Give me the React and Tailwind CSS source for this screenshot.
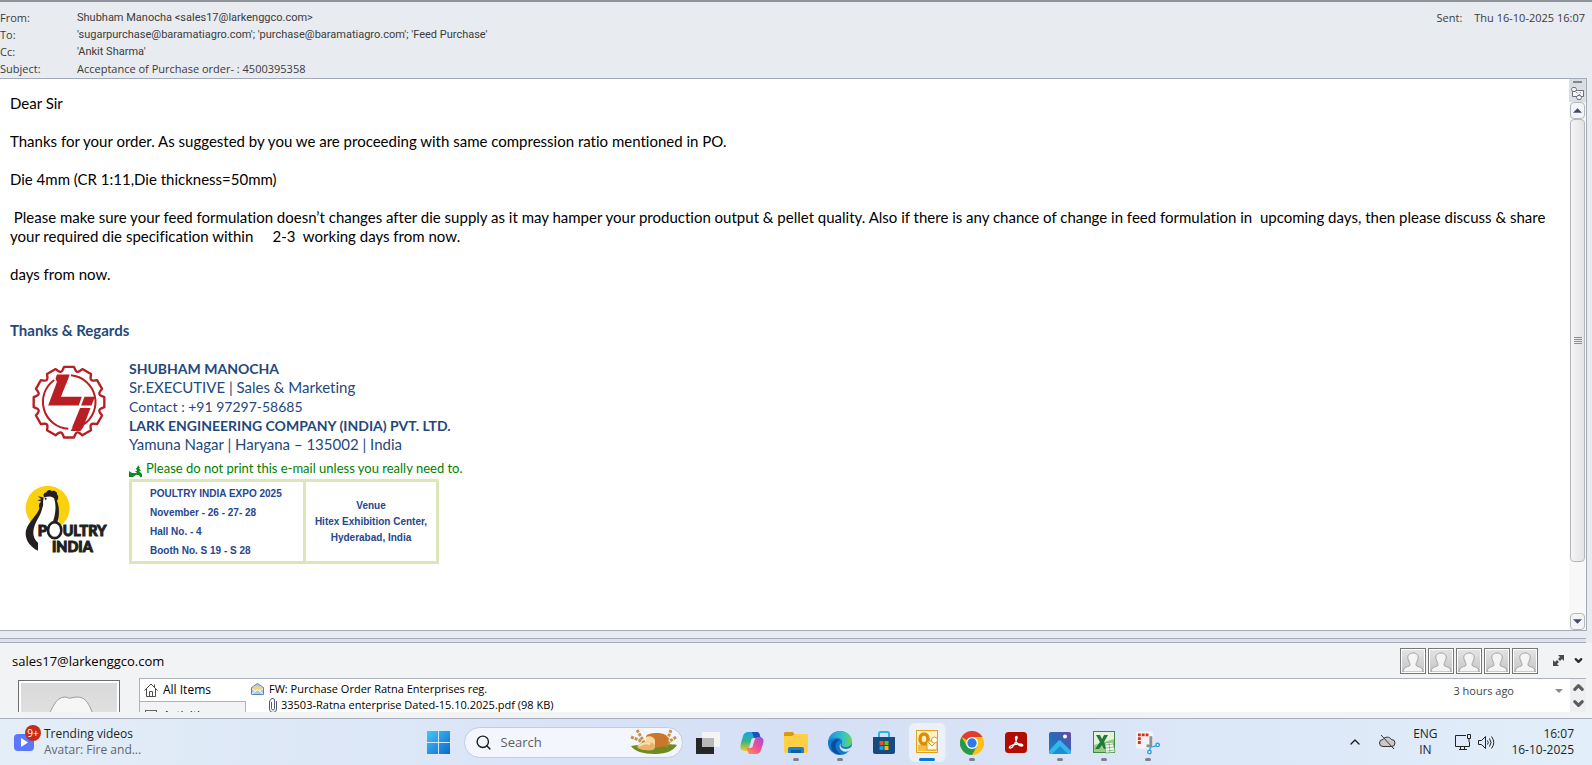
import { ChevronDown, ChevronUp, Search } from "lucide-react";

const headers = [
  { label: "From:", value: "Shubham Manocha <sales17@larkenggco.com>" },
  { label: "To:", value: "'sugarpurchase@baramatiagro.com'; 'purchase@baramatiagro.com'; 'Feed Purchase'" },
  { label: "Cc:", value: "'Ankit Sharma'" },
  { label: "Subject:", value: "Acceptance of Purchase order- : 4500395358", wide: true },
];

// Cog outline: 12 flat teeth joined by shallow curved valleys
function cogPath() {
  const at = (angle, r) => `${(128 + r * Math.cos(angle)).toFixed(1)} ${(128 + r * Math.sin(angle)).toFixed(1)}`;
  let d = "";
  for (let i = 0; i < 12; i++) {
    const mid = (i * 30 - 90) * (Math.PI / 180);
    d += `${i === 0 ? "M" : "L"}${at(mid - 0.14, 106)}L${at(mid + 0.14, 106)}L${at(mid + 0.19, 98)}`;
    d += `Q${at(mid + 0.26, 89)} ${at(mid + 0.334, 98)}`;
  }
  return d + "Z";
}

function LarkLogo() {
  return (
    <svg viewBox="18 18 220 222" className="w-[74px] h-[75px]" role="img" aria-label="Lark logo">
      <path d={cogPath()} fill="none" stroke="#b81f25" strokeWidth="7" strokeLinejoin="round" />
      <path d="M84 62A80 80 0 0 0 126 207M134 48A80 80 0 0 1 170 195" fill="none" stroke="#b81f25" strokeWidth="6" />
      <path d="M92 46h38l-4 12-22 54h62l-9 26H66l26-70-4-10z" fill="#b81f25" />
      <path d="M174 112h31l-10 26h-31zM161 145h31l-22 58-8 11h-29l6-11h-2z" fill="#b81f25" />
    </svg>
  );
}

function PoultryLogo() {
  return (
    <svg viewBox="72 44 252 212" className="w-[84px] h-[71px]" role="img" aria-label="Poultry India">
      <circle cx="143" cy="115" r="66" fill="#f9d10c" />
      <path d="M130 84c8-10 28-8 34 8 6 18 5 34 8 48 3 12 5 20 10 28l-22 34-44-30-16 40c-12-10-12-44 0-62 14-22 26-30 30-66z" fill="#fff" />
      <path d="M120 104c2 26-34 50-42 78-5 24 8 48 36 62v-24c-14-12-18-30-10-52 8-22 22-34 24-62zM133 84c-6-8 0-16 6-15 2-8 12-10 16-4 8-4 18 2 16 10 6 4 4 16-2 20-6-12-18-18-36-11z" fill="#231f20" />
      <path d="M162 86c8 20 4 50-2 66-2 8-4 12-8 18h14c10-14 14-44 8-66-1-8-6-16-12-18z" fill="#231f20" />
      <path d="M131 84l-17-4 10 9-12 3 12 4c-8 6-9 14-5 20 9 0 12-8 10-18z" fill="#231f20" />
      <circle cx="137" cy="88" r="3" fill="#231f20" />
      <ellipse cx="164" cy="182" rx="20" ry="24" fill="#fff" stroke="#231f20" strokeWidth="8" />
      <text x="113" y="200" className="fill-[#231f20] stroke-[#231f20] stroke-3 font-['Lato'] font-black text-[45px]">P</text>
      <text x="188" y="200" className="fill-[#231f20] stroke-[#231f20] stroke-3 font-['Lato'] font-black text-[43px]">ULTRY</text>
      <text x="156" y="247" className="fill-[#231f20] stroke-[#231f20] stroke-3 font-['Lato'] font-black text-[43px]">INDIA</text>
    </svg>
  );
}

function Signature() {
  return (
    <div className="flex text-[#1f497d]">
      <div className="w-[119px] shrink-0 flex flex-col items-start pl-[14px]">
        <div className="pl-2 pt-[6px]"><LarkLogo /></div>
        <div className="pt-[44px]"><PoultryLogo /></div>
      </div>
      <div>
        <p className="font-bold text-[14px] leading-[19px]">SHUBHAM MANOCHA</p>
        <p>Sr.EXECUTIVE | Sales &amp; Marketing</p>
        <p className="text-[14px] leading-[19px]">Contact : +91 97297-58685</p>
        <p className="font-bold text-[14px] leading-[19px]">LARK ENGINEERING COMPANY (INDIA) PVT. LTD.</p>
        <p>Yamuna Nagar | Haryana – 135002 | India</p>
        <p className="flex items-center gap-1 pt-[5px] pb-px text-[#008000] text-[13px] leading-[19px]">
          <svg viewBox="0 0 13 12" className="w-[13px] h-3 mt-1" fill="#0b8a1e" aria-hidden="true">
            <path d="M9 0l2 3h-1l2 3h-2l3 3v3h-2l-1-2H8L4 8h4L6 6h2L7 3h1zM0 6l3 2h4v2l-3 2H0z" />
          </svg>
          Please do not print this e-mail unless you really need to.
        </p>
        <table className="w-[310px] border-[3px] border-[#dbe7b9] font-['Liberation_Sans',sans-serif] font-bold text-[#26468f] text-[10px]">
          <tbody>
            <tr>
              <td className="w-[174px] border-r-[3px] border-[#dbe7b9] pl-[18px] pt-[2px] pb-px leading-[19px]">
                <p>POULTRY INDIA EXPO 2025</p>
                <p>November - 26 - 27- 28</p>
                <p>Hall No. - 4</p>
                <p>Booth No. S 19 - S 28</p>
              </td>
              <td className="text-center align-middle leading-4">
                <p>Venue</p>
                <p>Hitex Exhibition Center,</p>
                <p>Hyderabad, India</p>
              </td>
            </tr>
          </tbody>
        </table>
      </div>
    </div>
  );
}

function MessageScrollbar() {
  return (
    <div className="w-[17px] shrink-0 flex flex-col items-center bg-[#f8f8f9]">
      <div className="w-full h-[23px] bg-[#d9dee5] flex flex-col items-center pt-[2px] gap-1">
        <span className="w-[9px] h-[2px] bg-[#80868c]" />
        <svg viewBox="0 0 13 13" className="w-[13px] h-[13px]" fill="#f6f6f8" stroke="#6b7078" aria-hidden="true">
          <path d="M1.500 3.500h11v6h-11z" />
          <path d="M1.500.5h3l1 2-1 2h-3l-1-2zM6.500 8.500h3l1 2-1 2h-3l-1-2z" />
          <path d="M5 5l4 3M9 5l1 2" strokeDasharray="1 1" />
        </svg>
      </div>
      <button aria-label="Scroll up" className="w-[15px] h-[17px] shrink-0 border border-[#b3b8bf] rounded-sm bg-[#f5f5f6] flex items-center justify-center">
        <svg viewBox="0 0 10 5" className="w-[9px] h-[5px]"><path d="M5 0l5 5H0z" fill="#414b74" /></svg>
      </button>
      <div className="w-[15px] basis-[443px] grow-[9] border border-[#b3b8bf] rounded-sm bg-linear-to-r from-[#f4f4f5] to-[#e4e4e6] flex flex-col items-center justify-center gap-px">
        <span className="w-2 h-px bg-[#8a8f96]" />
        <span className="w-2 h-px bg-[#8a8f96]" />
        <span className="w-2 h-px bg-[#8a8f96]" />
        <span className="w-2 h-px bg-[#8a8f96]" />
      </div>
      <div className="basis-[51px] grow" />
      <button aria-label="Scroll down" className="w-[15px] h-[17px] shrink-0 border border-[#b3b8bf] rounded-sm bg-[#f5f5f6] flex items-center justify-center">
        <svg viewBox="0 0 10 5" className="w-[9px] h-[5px]"><path d="M5 5l5-5H0z" fill="#414b74" /></svg>
      </button>
    </div>
  );
}

function Avatar() {
  return (
    <button aria-label="Contact" className="w-[26px] h-[26px] border border-[#777] p-px bg-white">
      <svg viewBox="0 0 22 22" className="w-full h-full bg-linear-to-b from-[#e3e3e3] to-[#c6c6c6]" fill="#f4f4f4" stroke="#a2a2a2">
        <path d="M11 3c4 0 6 3 5 6s-2 4-2 6 7 1 7 7H1c0-6 7-5 7-7s-1-3-2-6 1-6 5-6z" />
      </svg>
    </button>
  );
}

function PeoplePane() {
  return (
    <section className="bg-[#f1f3f5] text-black font-['Open_Sans',sans-serif]">
      <div className="flex items-center h-[35px] pl-3 pr-2">
        <span className="pt-[2px] text-[13px]">sales17@larkenggco.com</span>
        <div className="ml-auto flex gap-[2px]">
          <Avatar /><Avatar /><Avatar /><Avatar /><Avatar />
        </div>
        <button aria-label="Expand" className="ml-[15px]">
          <svg viewBox="0 0 11 11" className="w-[11px] h-[11px]" fill="#4a4a4a">
            <path d="M5 0h6v6L9 4 7 6 5 4l2-2zM6 11H0V5l2 2 2-2 2 2-2 2z" />
          </svg>
        </button>
        <button aria-label="Collapse" className="ml-[9px]">
          <ChevronDown size={11} strokeWidth={5} color="#2d2d2d" />
        </button>
      </div>
      <div className="flex h-[34px] overflow-hidden pr-[6px]">
        <div className="ml-[18px] mt-[2px] w-[102px] h-[102px] shrink-0 border border-[#6e6e6e] bg-white p-[2px]">
          <svg viewBox="0 0 96 96" className="w-full h-full bg-linear-to-b from-[#d9d9d9] to-[#efefef]">
            <path d="M26 34c6-8 8-20 18-20 3 0 4 2 6 1 18-5 18 11 24 19v40H26z" fill="#f6f6f6" stroke="#9b9b9b" />
          </svg>
        </div>
        <div className="ml-[19px] flex grow border-t border-l border-[#aeb3bb] bg-white">
          <div className="w-[106px] shrink-0 text-[12px]">
            <button className="flex items-center gap-[5px] w-full h-[23px] pl-1 border-b border-[#aeb3bb]">
              <svg viewBox="0 0 14 14" className="w-[14px] h-[14px]" fill="none" stroke="#4d4d4d">
                <path d="M0.500 7.500L7 1l6.500 6.500M2.500 6v7.500h9V6M5.500 13V8.500h3V13M10.500 4V1.500" />
              </svg>
              All Items
            </button>
            <button className="flex items-center gap-[6px] w-full h-[27px] pl-[5px] border-r border-[#aeb3bb] bg-[#f1f3f5]">
              <span className="w-3 h-3 border border-[#666]" />
              Activities
            </button>
          </div>
          <div className="grow pl-[5px] pt-[2px] text-[11px] leading-4">
            <p className="flex items-center gap-[5px]">
              <svg viewBox="0 0 14 13" className="w-[13px] h-3" aria-hidden="true">
                <path d="M.5 5L7 .5 13.500 5v7.500H.5z" fill="#a9c9f0" stroke="#4f78b5" />
                <path d="M2.500 3.500h9v4L7 9 2.500 7.500z" fill="#f8d470" />
                <path d="M1 12l6-5 6 5M1 6l4 3M13 6L9 9" fill="none" stroke="#fff" />
              </svg>
              FW: Purchase Order Ratna Enterprises reg.
            </p>
            <p className="flex items-center gap-1 pl-[18px]">
              <svg viewBox="0 0 8 14" className="w-2 h-[14px]" fill="none" stroke="#4b5a70" aria-hidden="true">
                <path d="M2.500 4v6.500a1.500 1.500 0 0 0 3 0V3a2 2 0 0 0-4-1 3 3 0 0 0-1 2v7a3 3 0 0 0 7 0V3" />
              </svg>
              33503-Ratna enterprise Dated-15.10.2025.pdf (98 KB)
            </p>
          </div>
          <div className="flex items-start gap-[41px] pt-1 pr-[7px] text-[11px] leading-4 text-[#444]">
            3 hours ago
            <svg viewBox="0 0 8 4" className="w-2 h-1 mt-[6px]"><path d="M0 0h8L4 4z" fill="#8b8b8b" /></svg>
          </div>
          <div className="w-4 shrink-0 bg-[#eeeff1] flex flex-col items-center pt-px gap-px">
            <button aria-label="Previous items"><ChevronUp size={15} strokeWidth={5} color="#5c5c5c" /></button>
            <button aria-label="Next items"><ChevronDown size={15} strokeWidth={5} color="#5c5c5c" /></button>
          </div>
        </div>
      </div>
      <div className="h-[6px]" />
    </section>
  );
}

function TaskViewIcon() {
  return (
    <svg viewBox="0 0 24 24" className="w-6 h-6">
      <path d="M6 1h18v15H6z" fill="#f4f4f4" />
      <path d="M0 7h18v16H0z" fill="#262626" />
      <path d="M6 7h12v9H6z" fill="#b9b9b9" />
    </svg>
  );
}

function CopilotIcon() {
  return (
    <svg viewBox="0 0 24 24" className="w-6 h-6">
      <defs>
        <linearGradient id="cpA" x1="0" y1="0" x2="0" y2="1"><stop offset="0" stopColor="#1ba1e6" /><stop offset=".5" stopColor="#35b58a" /><stop offset="1" stopColor="#f2cf1d" /></linearGradient>
        <linearGradient id="cpB" x1="1" y1="0" x2="0" y2="1"><stop offset="0" stopColor="#9a4be6" /><stop offset=".5" stopColor="#f0538f" /><stop offset="1" stopColor="#ff9a4a" /></linearGradient>
      </defs>
      <path d="M8 1h8l2 6h-4c-2 0-3 1-3 3l-2 7c-1 3-2 3-4 3-5 0-5-4-4-8l2-7c1-3 3-4 5-4z" fill="url(#cpA)" />
      <path d="M12 1h5c2 0 3 2 3 4l1 2h-7l-1-3z" fill="#1a50c4" />
      <path d="M16 23H9l-3-6h4c2 0 3-1 3-3l2-6c1-2 2-2 4-2 5 0 5 4 4 7l-2 6c-1 3-3 4-5 4z" fill="url(#cpB)" />
    </svg>
  );
}

function FolderIcon() {
  return (
    <svg viewBox="0 0 24 24" className="w-6 h-6">
      <path d="M0 2.500C0 1.500.7 1 1.500 1H9l2 3-2 4H0z" fill="#d99a12" />
      <path d="M0 5h8l3-2h12l1 1v17l-1 1H1l-1-1z" fill="#ffcf45" />
      <path d="M4 22v-4q0-2 2-2h12q2 0 2 2v4z" fill="#1583d0" />
      <path d="M7 19h10v3H7z" fill="#0b5ca8" />
    </svg>
  );
}

function EdgeIcon() {
  return (
    <svg viewBox="0 0 24 24" className="w-6 h-6">
      <defs>
        <linearGradient id="edA" x1="0" y1="0" x2="1" y2="0"><stop offset="0" stopColor="#1e8fdc" /><stop offset=".6" stopColor="#35c1c8" /><stop offset="1" stopColor="#6ad84f" /></linearGradient>
      </defs>
      <circle cx="12" cy="12" r="12" fill="#1179cf" />
      <path d="M.5 10C1 4 6 0 12 0c7 0 12 5 12 10 0 4-3 6-6 6-4 0-5-2-4-4 1-3-2-5-5-5-4 0-7 1-8.500 3z" fill="url(#edA)" />
      <path d="M10 10c-4 3-3 10 3 13-7 1-10-4-10-8 0-5 5-8 9-6z" fill="#0d4f9f" />
      <path d="M13 12c-2 3 1 6 5 6 2 0 4-1 5-2v2l-2 2c-7 3-12-4-8-8z" fill="#d9e6f7" />
    </svg>
  );
}

function StoreIcon() {
  return (
    <svg viewBox="0 0 24 24" className="w-6 h-6">
      <path d="M7 6V2.500C7 1.700 7.700 1 8.500 1h7c.8 0 1.500.7 1.500 1.500V6" fill="none" stroke="#27b4ee" strokeWidth="2" />
      <path d="M1 6h22v15a2 2 0 0 1-2 2H3a2 2 0 0 1-2-2z" fill="#174a80" />
      <path d="M7.500 10h4v4h-4z" fill="#f25022" /><path d="M12.500 10h4v4h-4z" fill="#7fba00" />
      <path d="M7.500 15h4v4h-4z" fill="#00a4ef" /><path d="M12.500 15h4v4h-4z" fill="#ffb900" />
    </svg>
  );
}

function OutlookIcon() {
  return (
    <svg viewBox="0 0 24 24" className="w-6 h-6">
      <rect x="1.500" y=".5" width="21" height="22" fill="#fdf0c4" stroke="#e0a21b" />
      <path d="M3 15c6-1 12-3 18-8v14H3z" fill="#f3bf3e" />
      <ellipse cx="9" cy="9" rx="4" ry="5" fill="none" stroke="#e08a08" strokeWidth="3.500" />
      <path d="M12 11h10v9H12z" fill="#fff6dd" stroke="#d9991d" />
      <path d="M12 11l5 5 5-5" fill="none" stroke="#d9991d" />
      <circle cx="19.500" cy="10" r="3" fill="#fff" stroke="#e0a21b" />
    </svg>
  );
}

function ChromeIcon() {
  return (
    <svg viewBox="0 0 24 24" className="w-6 h-6">
      <circle cx="12" cy="12" r="12" fill="#fbc116" />
      <path d="M12 12L1.600 6A12 12 0 0 1 22.400 6H12z" fill="#e33b2e" />
      <path d="M12 12l5 3-5 9A12 12 0 0 1 1.600 6L7 15z" fill="#269a48" />
      <circle cx="12" cy="12" r="6" fill="#fff" />
      <circle cx="12" cy="12" r="4.700" fill="#3178ee" />
    </svg>
  );
}

function AcrobatIcon() {
  return (
    <svg viewBox="0 0 24 24" className="w-6 h-6">
      <rect x="1" y="1" width="22" height="21" rx="3.500" fill="#b30b00" />
      <path d="M5.500 17c-1-2 5-4 9-4 5 0 5 2 3 2-3 0-6-4-6-8 0-2 2-2 1.500 0-.7 4-4.500 11-7.500 10z" fill="none" stroke="#fff" strokeWidth="1.300" />
    </svg>
  );
}

function PhotosIcon() {
  return (
    <svg viewBox="0 0 24 24" className="w-6 h-6">
      <defs>
        <linearGradient id="phA" x1="0" y1="1" x2="1" y2="0"><stop offset="0" stopColor="#1682cf" /><stop offset=".5" stopColor="#2a68b8" /><stop offset="1" stopColor="#6b49a5" /></linearGradient>
      </defs>
      <rect x="1" y="1" width="22" height="22" rx="2" fill="url(#phA)" />
      <path d="M1 20l9-10c1-1 2-1 3 0l10 10v1a2 2 0 0 1-2 2H3a2 2 0 0 1-2-2z" fill="#33b6ea" />
      <path d="M4 23l8-8 8 8z" fill="#1b8fd6" />
      <circle cx="17" cy="5.500" r="2" fill="#fff" />
    </svg>
  );
}

function ExcelIcon() {
  return (
    <svg viewBox="0 0 24 24" className="w-6 h-6">
      <rect x="1.500" y=".5" width="21" height="21" fill="#e4f1dd" stroke="#3c8a3f" />
      <path d="M2 14L22 8v13H2z" fill="#9ccb8b" />
      <path d="M4 4h4l2 4 2-4h4l-4 7 4 7h-4l-2-4-3 4H3l5-7z" fill="#217a35" />
      <path d="M13 12l8-1 2 10-9 1z" fill="#fff" stroke="#5fa35a" strokeWidth=".7" />
      <path d="M14 14l7-1M14 17l8-1M15 20l7-1M17 12l1 9" stroke="#5fa35a" strokeWidth=".7" />
    </svg>
  );
}

function SnipIcon() {
  return (
    <svg viewBox="0 0 25 24" className="w-6 h-6">
      <rect x="0" y="0" width="18" height="18" rx="2" fill="#f3f3f5" />
      <path d="M13 3.500H3.500V14" fill="none" stroke="#d13412" strokeWidth="3" strokeDasharray="3 1" />
      <path d="M11 15h6M15.500 5v12" fill="none" stroke="#8b8f96" strokeWidth="3" />
      <path d="M17 16l4-1M15 17l-1 3" fill="none" stroke="#2a9fe0" strokeWidth="1.500" />
      <circle cx="22.500" cy="14" r="1.800" fill="#fff" stroke="#2a9fe0" strokeWidth="1.500" />
      <circle cx="14" cy="21.500" r="1.800" fill="#fff" stroke="#2a9fe0" strokeWidth="1.500" />
    </svg>
  );
}

const apps = [
  { name: "Task view", Icon: TaskViewIcon },
  { name: "Copilot", Icon: CopilotIcon },
  { name: "File Explorer", Icon: FolderIcon, running: true },
  { name: "Edge", Icon: EdgeIcon, running: true },
  { name: "Store", Icon: StoreIcon },
  { name: "Outlook", Icon: OutlookIcon, active: true },
  { name: "Chrome", Icon: ChromeIcon, running: true },
  { name: "Acrobat", Icon: AcrobatIcon },
  { name: "Photos", Icon: PhotosIcon, running: true },
  { name: "Excel", Icon: ExcelIcon, running: true },
  { name: "Snipping Tool", Icon: SnipIcon, running: true },
];

function AppButton({ name, Icon, running, active }) {
  return (
    <button
      aria-label={name}
      className={
        active
          ? "w-[38px] mx-[3px] h-[39px] rounded-md bg-[#ebf0fa] border-r-2 border-[#dfe5f4] flex flex-col items-center pt-[7px]"
          : "w-11 h-[39px] flex flex-col items-center pt-2"
      }
    >
      <Icon />
      {running && <span className="mt-[3px] w-[6px] h-[3px] rounded-full bg-[#7c808a]" />}
      {active && <span className="mt-1 w-4 h-[3px] rounded-full bg-[#0a78d4]" />}
    </button>
  );
}

function BreadIcon() {
  return (
    <svg viewBox="0 0 48 26" className="w-12 h-[26px] shrink-0" aria-hidden="true">
      <path d="M1 17c6-2 40-3 46-1-3 5-10 9-22 9S4 22 1 17z" fill="#6f8a1e" />
      <path d="M1 8l8 3 5 5M7 1l4 7 4 7M46 8l-6 4-4 5M41 1l-3 8-2 7" stroke="#c8924b" strokeWidth="3" fill="none" strokeDasharray="3 1" />
      <path d="M16 8c0-3 5-4 11-4s11 2 11 6v7l-14 2-8-3z" fill="#c9772a" />
      <path d="M16 8c3-2 9 0 9 4v7h-8l-1-5z" fill="#f6d9a0" />
      <path d="M7 18c1-4 9-6 15-4 4 1 4 5 1 7-6 1-14 0-16-3z" fill="#e8b46c" />
      <path d="M9 17c4-3 8-3 11-2" stroke="#fae3b5" strokeWidth="2" fill="none" />
    </svg>
  );
}

function Taskbar() {
  return (
    <footer className="grid grid-cols-[1fr_auto_1fr] items-center h-[47px] pr-[6px] border-t border-[#a9afba] bg-linear-to-r from-[#e3eef8] via-[#d5dff6] to-[#e2eef9] font-['Open_Sans',sans-serif] text-[#1f1f1f] text-[12px] leading-4">
      <button className="flex items-center pl-[14px] gap-[3px] text-left justify-self-start">
        <span className="relative w-[27px] h-[26px] mb-2">
          <svg viewBox="0 0 20 17" className="absolute left-0 bottom-0 w-5 h-[17px]" aria-hidden="true">
            <rect width="20" height="17" rx="4" fill="#5b78f8" />
            <path d="M7 4l7 4.500L7 13z" fill="#fff" />
          </svg>
          <span className="absolute right-0 top-0 w-4 h-4 rounded-full bg-[#c42b1c] text-white text-[10px] text-center">9+</span>
        </span>
        <span>
          <span className="block">Trending videos</span>
          <span className="block text-[#5e6670]">Avatar: Fire and...</span>
        </span>
      </button>

      <div className="flex items-center">
        <button aria-label="Start" className="w-11 h-[39px] flex items-center justify-center">
          <svg viewBox="0 0 23 23" className="w-[23px] h-[23px]">
            <defs>
              <linearGradient id="win" x1="0" y1="0" x2="1" y2="1"><stop offset="0" stopColor="#45c6fa" /><stop offset="1" stopColor="#0669cf" /></linearGradient>
            </defs>
            <path d="M0 0h11v11H0zM12 0h11v11H12zM0 12h11v11H0zM12 12h11v11H12z" fill="url(#win)" />
          </svg>
        </button>
        <label className="ml-[3px] mr-[3px] w-[219px] h-[31px] rounded-full bg-[#f3f6fd] border border-[#c3cce2] flex items-center pl-[10px] pr-1">
          <Search size={17} strokeWidth={2} className="shrink-0" />
          <input aria-label="Search" placeholder="Search" className="min-w-0 grow pl-[9px] text-[13px] bg-transparent outline-none placeholder:text-[#5c5f66]" />
          <BreadIcon />
        </label>
        {apps.map((app) => <AppButton key={app.name} {...app} />)}
      </div>

      <div className="flex items-center justify-self-end pr-3">
        <button aria-label="Show hidden icons"><ChevronUp size={16} strokeWidth={2} /></button>
        <button aria-label="OneDrive" className="ml-4">
          <svg viewBox="0 0 17 16" className="w-[17px] h-4" stroke="#333">
            <path d="M4 12.500a3.500 3.500 0 0 1 0-7 5 5 0 0 1 8.500 0 3.500 3.500 0 0 1 0 7z" fill="#c9c9cb" />
            <path d="M2 1l13 14" fill="none" />
          </svg>
        </button>
        <button className="ml-[15px] w-7 text-center">ENG<br />IN</button>
        <button aria-label="Network and volume" className="ml-4 flex items-center gap-[6px]">
          <svg viewBox="0 0 17 17" className="w-[17px] h-[17px]" fill="none" stroke="#222">
            <path d="M11 1.500H.5v11h14V8M4 15.500h8M5.500 12.500v3M9.500 12.500v3M12.500.5h3v4h-3zM14 4.500V8" />
          </svg>
          <svg viewBox="0 0 17 15" className="w-[17px] h-[15px]" fill="none" stroke="#222">
            <path d="M.5 5.500h3l4-4v12l-4-4h-3zM9.500 5.500q1.500 2 0 4M11.500 3.500q3 4 0 8M13.500 1.500q4.500 6 0 12" />
          </svg>
        </button>
        <button className="ml-4 text-right">16:07<br />16-10-2025</button>
      </div>
    </footer>
  );
}

export default function App() {
  return (
    <div className="min-h-screen flex flex-col bg-[#e8ebf0]">
      <header className="flex justify-between border-t-2 border-[#8f939a] pt-[7px] pb-px pr-[7px] font-['Open_Sans',sans-serif] text-[11px] leading-[17px] text-[#3b3b3b]">
        <dl className="grid grid-cols-[77px_auto]">
          {headers.map((row) => (
            <div key={row.label} className="contents">
              <dt>{row.label}</dt>
              <dd className={row.wide ? "" : "font-['Roboto',sans-serif]"}>{row.value}</dd>
            </div>
          ))}
        </dl>
        <p className="flex gap-3"><span>Sent:</span><span>Thu 16-10-2025 16:07</span></p>
      </header>

      <div className="grow flex mr-[5px] border-y border-r border-[#a3abb8] bg-white">
        <main className="grow pl-[10px] pr-5 pt-[15px] pb-8 font-['Lato',sans-serif] [font-variant-ligatures:none] text-[15px] leading-[19px] text-black">
          <p className="mb-[19px]">Dear Sir</p>
          <p className="mb-[19px]">Thanks for your order. As suggested by you we are proceeding with same compression ratio mentioned in PO.</p>
          <p className="mb-[19px]">Die 4mm (CR 1:11,Die thickness=50mm)</p>
          <p className="mb-[19px] whitespace-pre-wrap">{" Please make sure your feed formulation doesn’t changes after die supply as it may hamper your production output & pellet quality. Also if there is any chance of change in feed formulation in  upcoming days, then please discuss & share your required die specification within     2-3  working days from now."}</p>
          <p className="mb-[37px]">days from now.</p>
          <p className="mb-[19px] font-bold text-[#1f497d]">Thanks &amp; Regards</p>
          <Signature />
        </main>
        <MessageScrollbar />
      </div>

      <div className="mt-[7px] mr-[6px] h-[5px] border-y border-[#a3abb8] bg-[#dfe2e8]" />
      <PeoplePane />
      <Taskbar />
    </div>
  );
}
